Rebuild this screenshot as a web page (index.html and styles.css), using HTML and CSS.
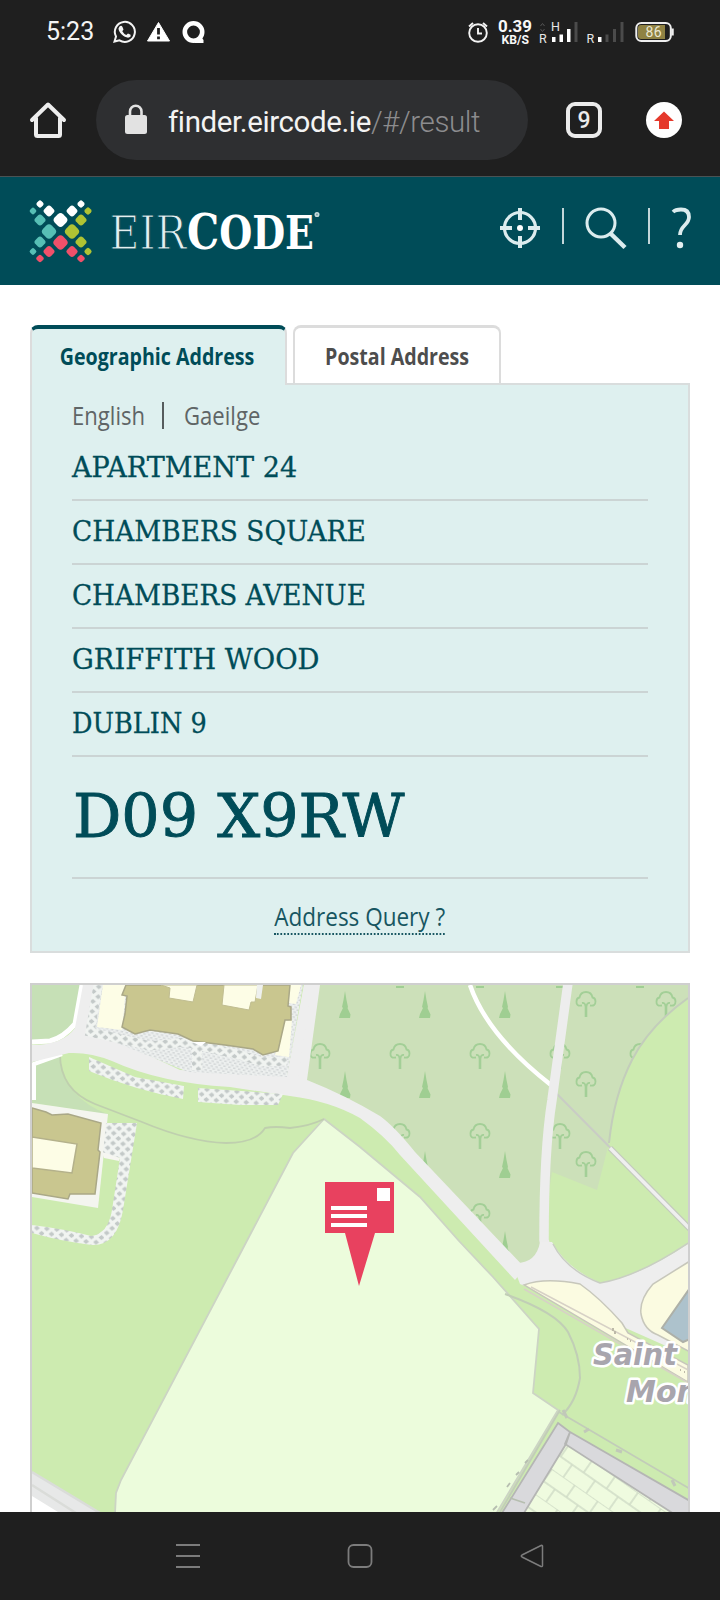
FILE: index.html
```html
<!DOCTYPE html>
<html lang="en">
<head>
<meta charset="utf-8">
<title>Eircode Finder</title>
<link rel="stylesheet" href="styles.css">
</head>
<body>
<div class="screen">
  <div class="status">
    <span class="clock">5:23</span>
    <svg class="status-icons" width="120" height="30" viewBox="108 16 120 30">
      <g fill="none" stroke="#f4f4f4" stroke-width="2">
        <path d="M114.5 41.5l1.5-5A10 10 0 1 1 119.500 40.300z"/>
      </g>
      <path d="M119.500 26.500q2-1.500 3 .5l1 2.500-1.200 1.700q1.500 2.700 4 3.700l1.700-1.400 2.600 1.200q.8 2-1.600 2.900c-4 1-10.500-5-10.500-9z" fill="#f4f4f4"/>
      <path d="M158.500 22.500l11 18.500h-22z" fill="#fff" stroke="#fff" stroke-linejoin="round"/>
      <path d="M158.500 28v6.500M158.500 36.500v2.700" stroke="#1f1f1f" stroke-width="2.800"/>
      <circle cx="193.500" cy="32" r="8.700" fill="none" stroke="#fff" stroke-width="4.600"/>
      <path d="M194 43h9.500v-3l-3-4z" fill="#fff"/>
    </svg>
    <svg class="status-right" width="220" height="34" viewBox="462 14 220 34">
      <g fill="none" stroke="#f4f4f4" stroke-width="1.900">
        <circle cx="478" cy="33" r="8.800"/>
        <path d="M478 28v5.500h4M469 26.500l4-3.500M487 26.500l-4-3.500"/>
      </g>
      <text x="498" y="32" class="net" font-size="16.500" textLength="34" lengthAdjust="spacingAndGlyphs">0.39</text>
      <text x="501.500" y="44" class="net" font-size="13" textLength="27.500" lengthAdjust="spacingAndGlyphs">KB/S</text>
      <path d="M540.500 26l2-2.500 2 2.500M540.500 29l2 2.500 2-2.500" stroke="#555" fill="none"/>
      <text x="539" y="43" class="sig" font-size="12.500">R</text>
      <text x="551" y="31" class="sig" font-size="12.500">H</text>
      <g fill="#fff"><path d="M552 37h3.500v5h-3.500zM559.500 34.500h3.500v7.500h-3.500zM567 29h3.500v13h-3.500z"/></g>
      <path d="M574.500 22h3v20h-3z" fill="#4b4b4b"/>
      <text x="586.500" y="43" class="sig" font-size="12.500">R</text>
      <path d="M598 37h3.500v5h-3.500z" fill="#fff"/>
      <path d="M605.500 34.500h3v7.500h-3zM613 29h3v13h-3zM620.500 22h3v20h-3z" fill="#4b4b4b"/>
      <rect x="636.300" y="23" width="34.500" height="18" rx="5" fill="#1f1f1f" stroke="#eee" stroke-width="2"/>
      <path d="M641 25h24v14h-24a3 3 0 0 1-3-3v-8a3 3 0 0 1 3-3z" fill="#8f8243"/>
      <path d="M672.500 28.500v7" stroke="#eee" stroke-width="2.500"/>
      <text x="645.500" y="37" font-size="14" fill="#ece8d2" font-family="Roboto, sans-serif" textLength="16">86</text>
    </svg>
  </div>
  <div class="browser">
    <svg class="home" width="40" height="40" viewBox="28 100 40 40" fill="none" stroke="#ededed" stroke-width="4" stroke-linejoin="round" stroke-linecap="round">
      <path d="M32 120L48 104.500 64 120M36 118v16.500q0 1.500 1.500 1.500h21q1.500 0 1.500-1.500V118"/>
    </svg>
    <div class="omnibox">
      <svg width="24" height="32" viewBox="124 104 24 32"><rect x="125" y="115" width="22" height="19" rx="2.500" fill="#e2e2e2"/><path d="M130 116v-4.500a5.700 5.700 0 0 1 11.500 0v4.500" fill="none" stroke="#e2e2e2" stroke-width="2.600"/></svg>
      <span class="url"><b>finder.eircode.ie</b>/#/result</span>
    </div>
    <div class="tabcount">9</div>
    <svg class="update" width="36" height="36" viewBox="0 0 36 36"><circle cx="18" cy="18" r="18" fill="#fff"/><path d="M18 9.500l10 9.500h-5v8h-10v-8h-5z" fill="#e5392c"/></svg>
  </div>
  <header class="site">
    <svg class="logo" width="300" height="68" viewBox="28 197 300 68">
      <defs><rect id="dot" x="-4.700" y="-4.700" width="9.400" height="9.400" rx="3" transform="rotate(45)"/></defs>
      <g fill="#fff"><use href="#dot" transform="translate(40 203) scale(.66)"/><use href="#dot" transform="translate(49 210) scale(.98)"/><use href="#dot" transform="translate(60.500 219) scale(1.250)"/><use href="#dot" transform="translate(72 210) scale(.98)"/><use href="#dot" transform="translate(81 203) scale(.66)"/></g>
      <g fill="#57bfb5"><use href="#dot" transform="translate(33 210) scale(.62)"/><use href="#dot" transform="translate(40 219)"/><use href="#dot" transform="translate(49 230.500) scale(1.300)"/><use href="#dot" transform="translate(40 241)"/><use href="#dot" transform="translate(33 250.500) scale(.62)"/></g>
      <g fill="#afc333"><use href="#dot" transform="translate(88 210) scale(.66)"/><use href="#dot" transform="translate(81 219)"/><use href="#dot" transform="translate(72 230.500) scale(1.300)"/><use href="#dot" transform="translate(81 241)"/><use href="#dot" transform="translate(88 250.500) scale(.66)"/></g>
      <g fill="#f0506a"><use href="#dot" transform="translate(60.500 241.500) scale(1.300)"/><use href="#dot" transform="translate(49 250.500)"/><use href="#dot" transform="translate(72 250.500)"/><use href="#dot" transform="translate(40 257.500) scale(.68)"/><use href="#dot" transform="translate(81 257.500) scale(.68)"/></g>
      <text x="109.500" y="247.500" class="eir" textLength="77" lengthAdjust="spacingAndGlyphs">EIR</text>
      <text x="187" y="247.500" class="code" textLength="127" lengthAdjust="spacingAndGlyphs"><tspan font-size="49">C</tspan>ODE</text>
      <circle cx="317" cy="213.500" r="1.800" fill="#7fa6ab" stroke="#c4d8da" stroke-width="1.500"/>
    </svg>
    <svg class="tools" width="196" height="44" viewBox="498 206 196 44" fill="none" stroke="#dcecee">
      <g stroke-width="3.200"><circle cx="520" cy="228" r="15.500"/><path d="M520 208v12M520 236v12M500 228h12M528 228h12" stroke-width="4"/></g>
      <circle cx="520" cy="228" r="3" fill="#fff" stroke="none"/>
      <path d="M563 208v36M649 208v36" stroke="#c3d6d9" stroke-width="2"/>
      <circle cx="601" cy="223" r="14" stroke-width="3"/><path d="M610 233l15 14.500" stroke-width="4.500"/>
      <path d="M673 212q2.500-2.500 8-2.500 8 0 8 7.500 0 4-4.500 8.500t-4.500 9.500" stroke-width="3.800"/><circle cx="680" cy="245" r="3.200" fill="#e4f0f1" stroke="none"/>
    </svg>
  </header>
  <main>
    <div class="tabs">
      <div class="tab active"><span class="fit">Geographic Address</span></div>
      <div class="tab"><span class="fit">Postal Address</span></div>
    </div>
    <section class="panel">
      <div class="langs"><span class="fit">English</span><i></i><span class="fit">Gaeilge</span></div>
      <div class="line"><span class="l1">APARTMENT 24</span></div>
      <div class="line"><span class="l2">CHAMBERS SQUARE</span></div>
      <div class="line"><span class="l3">CHAMBERS AVENUE</span></div>
      <div class="line"><span class="l4">GRIFFITH WOOD</span></div>
      <div class="line"><span class="l5">DUBLIN 9</span></div>
      <div class="eircode"><span>D09 X9RW</span></div>
      <div class="query"><a>Address Query ?</a></div>
    </section>
    <section class="map">
      <svg width="656" height="527" viewBox="32 985 656 527">
        <defs>
          <pattern id="pave" width="10" height="10" patternUnits="userSpaceOnUse" patternTransform="rotate(4)"><rect width="10" height="10" fill="#f1f4f1"/><path d="M2.500 0l3 2.500-3 2.500-3-2.500zM7.500 5l3 2.500-3 2.500-3-2.500z" fill="#c3c9c8"/></pattern>
          <pattern id="fine" width="5" height="5" patternUnits="userSpaceOnUse" patternTransform="rotate(12)"><rect width="5" height="5" fill="#edf0ef"/><path d="M0 1.200h2.500M2.500 3.700H5" stroke="#d3d7d8" stroke-width="1.600"/></pattern>
          <pattern id="graves" width="28" height="30" patternUnits="userSpaceOnUse" patternTransform="translate(566 1442) rotate(35)"><path d="M0 0H28M0 15H28M4 0V15M18 15V30" fill="none" stroke="#cfdbc6" stroke-width="1.500"/></pattern>
          <g id="fir" fill="#9fce92"><path d="M0-14l1.500 9 1.500 7-.5 1 3 6.500-.5 3.500H-6l1-4L-2 3-3 2-1.500-5z"/></g>
          <g id="oak" fill="none" stroke="#a3cf97" stroke-width="1.800"><path d="M-4 3.500q-6 1-5.500-4 0-3.500 3-4 1-5.500 6.500-5.500t6.500 5.500q3 .5 3 4 0 5-5.500 4M-4 1q3-.5 4 4 1-4.500 4-4"/><path d="M0 3v12" stroke-width="2.600"/></g>
          <path id="woodShape" d="M320 985H688V998Q650 1025 632 1060 614 1095 609 1143L597 1190 552 1172 544 1225 540 1255Q535 1270 516 1266L490 1250 372 1120 305 1080z"/>
          <clipPath id="woodClip"><use href="#woodShape"/></clipPath>
        </defs>
        <rect x="32" y="985" width="656" height="527" fill="#cdebb0"/>
        <path d="M32 985H82L75 1024Q55 1043 32 1042zM32 1062L60 1054Q62 1098 110 1115L32 1103z" fill="#c6e0b6"/>
        <use href="#woodShape" fill="#cce0b9"/>
        <g clip-path="url(#woodClip)">
          <use href="#fir" x="345" y="1005"/><use href="#fir" x="425" y="1005"/><use href="#fir" x="505" y="1005"/>
          <use href="#fir" x="345" y="1085"/><use href="#fir" x="425" y="1085"/><use href="#fir" x="505" y="1085"/>
          <use href="#fir" x="425" y="1165"/><use href="#fir" x="505" y="1165"/><use href="#fir" x="505" y="1245"/>
          <use href="#oak" x="320" y="1054"/><use href="#oak" x="400" y="1054"/><use href="#oak" x="480" y="1054"/><use href="#oak" x="560" y="1054"/><use href="#oak" x="640" y="1054"/>
          <use href="#oak" x="400" y="1134"/><use href="#oak" x="480" y="1134"/><use href="#oak" x="560" y="1134"/><use href="#oak" x="480" y="1214"/>
          <use href="#oak" x="586" y="1002"/><use href="#oak" x="666" y="1002"/><use href="#oak" x="586" y="1082"/><use href="#oak" x="586" y="1162"/>
          <path d="M396 987h8M476 987h8M556 987h8M636 987h8" stroke="#9fce92" stroke-width="2"/>
        </g>
        <path d="M688 998Q650 1025 632 1060 614 1095 609 1143" fill="none" stroke="#c3cdbb" stroke-width="2"/>
        <!-- sports field -->
        <path d="M324 1119L293 1153 240 1254 121 1480 116 1493 115 1514H496L558 1410 533 1393 539 1329 493 1277 459 1241 420 1197 360 1147z" fill="#ecfcdc" stroke="#ccd4c4" stroke-width="1.800"/>
        <path d="M60 1054Q60 1090 95 1104L142 1122Q190 1142 226 1143 256 1143 265 1128 275 1126 290 1128 310 1126 324 1119" fill="none" stroke="#bfcfae" stroke-width="1.800"/>
        <!-- footpaths and roads -->
        <path d="M470 985Q487 1035 551 1085" fill="none" stroke="#fff" stroke-width="4.500"/>
        <path d="M555 1092L688 1226" fill="none" stroke="#c9ccc5" stroke-width="2"/>
        <path d="M610 1148L690 1229" fill="none" stroke="#c4cabe" stroke-width="6"/><path d="M610 1148L690 1229" fill="none" stroke="#efefef" stroke-width="3.500"/>
        <path d="M568 983Q560 1040 552 1100 544 1150 544 1240L550 1262" fill="none" stroke="#ededed" stroke-width="9.500"/>
        <path d="M32 1042L50 1041Q63 1038 75 1024L82 985" fill="none" stroke="#fff" stroke-width="5"/>
        <path d="M34 1100V1064L62 1054" fill="none" stroke="#fff" stroke-width="4"/>
        <path d="M83 985H102L95 1030 180 1070 287 1075 304 985H320L307 1080Q345 1095 380 1116 395 1127 415 1152L525 1268 515 1280 400 1155Q385 1136 360 1118 330 1101 290 1096L230 1087Q160 1083 112 1061 90 1052 69 1053L32 1062V1045Q63 1045 75 1028z" fill="#eee"/>
        <path d="M98 985L90 1032 188 1072 287 1077 303 985z" fill="url(#fine)"/>
        <path d="M288 1077L304 985h8l-14 92z" fill="#eee"/>
        <path d="M98 985L90 1032 150 1046 185 1042 240 1055 262 1062 287 1061" fill="none" stroke="url(#pave)" stroke-width="9"/>
        <path d="M197 1042v28" fill="none" stroke="url(#pave)" stroke-width="10"/>
        <path d="M89 1057L135 1077 184 1086 183 1099Q135 1090 89 1071zM198 1088L283 1094 278 1105 240 1105 198 1102z" fill="url(#pave)"/>
        <path d="M103 985H126L124 1010 122 1030 97 1027zM290 985h11l-5 19-8-1zM284 1021l8-1-3 37-14-2z" fill="#fdfde6"/>
        <path d="M126 985L122 995 127 996 125 1014 122 1027 135 1034 150 1030 178 1034 193 1041 225 1045 253 1049 263 1055 278 1051 285 1020H291V1007L288 1006 290 985z" fill="#c9c68f" stroke="#aaa887" stroke-width="1.500"/>
        <path d="M161 985l9 3-1 10 24 4 4-17zM224 985h34l-3 17h-4l-2 8-27-5z" fill="#fdfde6" stroke="#c0bd91" stroke-width="1"/>
        <path d="M257 985h6l-2 14-5-1z" fill="#eef0ee"/><path d="M192 1042h14l-5 4z" fill="#fff"/>
        <!-- west block -->
        <path d="M32 1103L108 1114 98 1208 32 1197z" fill="#f4f5ef"/>
        <path d="M106 1123H137L123 1210Q117 1246 92 1245 60 1241 32 1233V1225Q65 1229 91 1236 108 1234 112 1210L120 1158 103 1154z" fill="url(#pave)"/>
        <path d="M102 1152l18 6-1 3-15-3z" fill="#f6f6f1"/>
        <path d="M32 1108L46 1112 52 1115 68 1114 101 1123 98 1150 100 1152 95 1194 70 1194 68 1199 32 1193z" fill="#c9c68f" stroke="#aaa887" stroke-width="1.500"/>
        <path d="M32 1137L77 1144 72 1173 32 1168z" fill="#fdfde6" stroke="#b4b18b" stroke-width="1.500"/>
        <!-- junction by the chapel -->
        <path d="M512 1263Q536 1265 540 1242H552Q566 1268 600 1283 638 1277 688 1244V1342L675 1350 630 1330 520 1284z" fill="#eee"/>
        <path d="M553 1244Q566 1270 600 1283 637 1277 688 1243" fill="none" stroke="#c9cec3" stroke-width="1.500"/>
        <path d="M524 1285Q545 1277 580 1284 600 1298 622 1323L628 1333 688 1365V1382z" fill="#fbfbe1" stroke="#c7c7bb" stroke-width="1.500"/>
        <path d="M524 1289L690 1384M531 1287L690 1371" stroke="#d7d1c6" stroke-width="1.500"/>
        <path d="M690 1261L653 1284Q639 1300 641 1314 644 1330 658 1335L690 1352z" fill="#fbfbe1" stroke="#c7c7bb" stroke-width="1.500"/>
        <path d="M690 1288L662 1328 683 1342 690 1339z" fill="#adc2cc" stroke="#adb0a8" stroke-width="2"/>
        <path d="M613 1328v3M615 1331v3M627 1339h1M630 1341h1M680 1370h1M684 1372h1" stroke="#bdbaa8" stroke-width="2"/>
        <path d="M505 1294Q556 1312 568 1332 580 1355 580 1378 576 1402 562 1415" fill="none" stroke="#c1ceb6" stroke-width="2"/>
        <path d="M559 1412L690 1489M560 1410L500 1512" fill="none" stroke="#c2ccb9" stroke-width="1.800"/>
        <path d="M563 1410l4 8M616 1450l6 2M672 1480l3 6M584 1432l5-3" stroke="#c1c8b9" stroke-width="3"/>
        <path d="M566 1442L688 1512H522z" fill="#effbdf"/><path d="M566 1442L688 1512H522z" fill="url(#graves)"/>
        <path d="M558 1423L570 1432 566 1444 524 1513H502zM570 1432L690 1501V1514H674L565 1444z" fill="#d9d9dc" stroke="#b5b6b4" stroke-width="1.800"/>
        <path d="M510 1498l15 5M493 1510l4-4M507 1487l3-4M516 1475l3-3M525 1463l3-3" stroke="#b6beb0" stroke-width="1.800"/>
        <path d="M32 1472L97 1512H32z" fill="#e7e8e8"/><path d="M32 1472L100 1513M32 1485L76 1513" stroke="#dadcd9" stroke-width="2.500"/><path d="M32 1496L58 1512H32z" fill="#fff"/>
        <g class="place"><text x="593" y="1365" textLength="84" lengthAdjust="spacingAndGlyphs">Saint</text><text x="626" y="1402" textLength="72" lengthAdjust="spacingAndGlyphs">Mon</text></g>
        <!-- address marker -->
        <path d="M325 1182H394V1233H375L359 1286 345 1233H325z" fill="#e8415f"/>
        <path d="M331 1208h36M331 1216h36M331 1225h36" stroke="#fff" stroke-width="3.800"/><rect x="377" y="1188" width="13" height="13" fill="#fff"/>
      </svg>
    </section>
  </main>
  <nav class="sysnav">
    <svg width="720" height="88" viewBox="0 1512 720 88" fill="none" stroke="#7c7c7c" stroke-width="1.800">
      <path d="M176 1545h24M176 1556h24M176 1567h24"/><rect x="348.500" y="1545" width="23" height="22" rx="5"/><path d="M542.500 1546q0-1-1.500-.5L522 1555q-1.500 1 0 2l19 9.500q1.500.5 1.500-1z" stroke-width="1.500"/>
    </svg>
  </nav>
</div>
</body>
</html>
```
FILE: styles.css
```css
* { box-sizing: border-box; }
body { margin: 0; background: #fff; font-family: "Open Sans", sans-serif; }
svg { display: block; flex: none; }
.screen { width: 720px; height: 1600px; overflow: hidden; display: flex; flex-direction: column; }
.status { height: 64px; background: #1f1f1f; color: #f4f4f4; display: flex; align-items: center; padding-left: 46px; flex: none; }
.clock { font: 25px/30px Roboto, sans-serif; width: 62px; }
.status-icons { margin-top: -2px; }
.status-right { margin-left: 234px; margin-top: -2px; }
.net { font-family: Roboto, sans-serif; font-weight: 700; fill: #f8f8f8; }
.sig { font-family: Roboto, sans-serif; fill: #e6e6e6; }
.browser { height: 113px; background: #1f1f1f; border-bottom: 1px solid #4a5254; padding: 16px 0 0 28px; display: flex; align-items: flex-start; flex: none; }
.home { margin-top: 20px; }
.omnibox { margin-left: 28px; width: 432px; height: 80px; border-radius: 40px; background: #2e2f31; display: flex; align-items: center; padding-left: 28px; }
.url { font: 300 29.500px/40px Roboto, sans-serif; letter-spacing: -.4px; color: #8c8c8e; margin: 3px 0 0 20px; white-space: nowrap; }
.url b { font-weight: 400; color: #f3f3f3; }
.tabcount { width: 36px; height: 36px; margin: 22px 0 0 38px; border: 4px solid #ebebeb; border-radius: 9px; color: #ebebeb; font: 500 23px/29px Roboto, sans-serif; text-align: center; }
.update { margin: 22px 0 0 44px; }
.site { height: 108px; background: #004c58; display: flex; padding: 21px 0 0 28px; flex: none; }
.logo { overflow: visible; }
.tools { margin: 8px 0 0 170px; }
.eir { font: 46px "DejaVu Serif", serif; fill: #e3eff0; stroke: #004c58; stroke-width: 1.2px; }
.code { font: bold 46px "DejaVu Serif", serif; fill: #fff; }
main { height: 1227px; flex: none; padding: 40px 30px 0; overflow: hidden; }
.tabs { display: flex; gap: 6px; height: 60px; position: relative; margin-bottom: -2px; }
.tab { width: 208px; height: 58px; border: 2px solid #dcdcdc; border-top-width: 3px; border-bottom: 0; border-radius: 8px 8px 0 0; display: flex; justify-content: center; align-items: center; padding-top: 1px; font: 700 24px/30px "Open Sans", sans-serif; color: #4d4d4d; white-space: nowrap; }
.tab.active { width: 257px; height: 60px; background: #def0ef; border-top: 4px solid #004c58; color: #004c58; padding: 0 2px 3px 0; }
.tab .fit { transform: scaleX(.817); }
.panel { height: 570px; border: 2px solid #d9dddd; background: #def0ef; padding: 12px 40px 0; }
.langs { height: 36px; display: flex; align-items: center; color: #5f6566; font: 26px/36px "Open Sans", sans-serif; }
.langs .fit { transform: scaleX(.85); transform-origin: 0 50%; width: 75px; }
.langs i { width: 2px; height: 27px; background: #565c5d; margin: 0 20px 0 15px; }
.line { height: 64px; border-bottom: 2px solid #cbd4d4; padding-top: 12px; font: 27.500px/36px "DejaVu Serif", serif; color: #004c58; white-space: nowrap; }
.line:nth-child(2) { height: 68px; padding-top: 16px; }
.line span, .eircode span { display: inline-block; transform-origin: 0 50%; -webkit-text-stroke: .3px #004c58; }
.line .l1 { transform: scaleX(.985); }
.line .l2 { transform: scaleX(.96); }
.line .l3 { transform: scaleX(.956); }
.line .l4 { transform: scaleX(.994); }
.line .l5 { transform: scaleX(.93); }
.eircode { height: 122px; border-bottom: 2px solid #cbd4d4; padding: 24px 0 0 1px; font: 59px/72px "DejaVu Serif", serif; color: #004c58; white-space: nowrap; }
.eircode span { transform: scaleX(1.022); -webkit-text-stroke-width: .9px; }
.query { display: flex; justify-content: center; padding-top: 19px; color: #175661; font: 26px/36px "Open Sans", sans-serif; }
.query a { border-bottom: 2px dotted #175661; height: 37px; white-space: nowrap; transform: scaleX(.865); }
.map { margin-top: 30px; border: 2px solid #cfcfcf; border-bottom: 0; height: 529px; }
.place text { font: italic bold 30px "DejaVu Sans", sans-serif; fill: #a8a5ad; stroke: #fff; stroke-width: 5px; stroke-linejoin: round; paint-order: stroke; }
.sysnav { height: 88px; background: #1f1f1f; flex: none; }
```
